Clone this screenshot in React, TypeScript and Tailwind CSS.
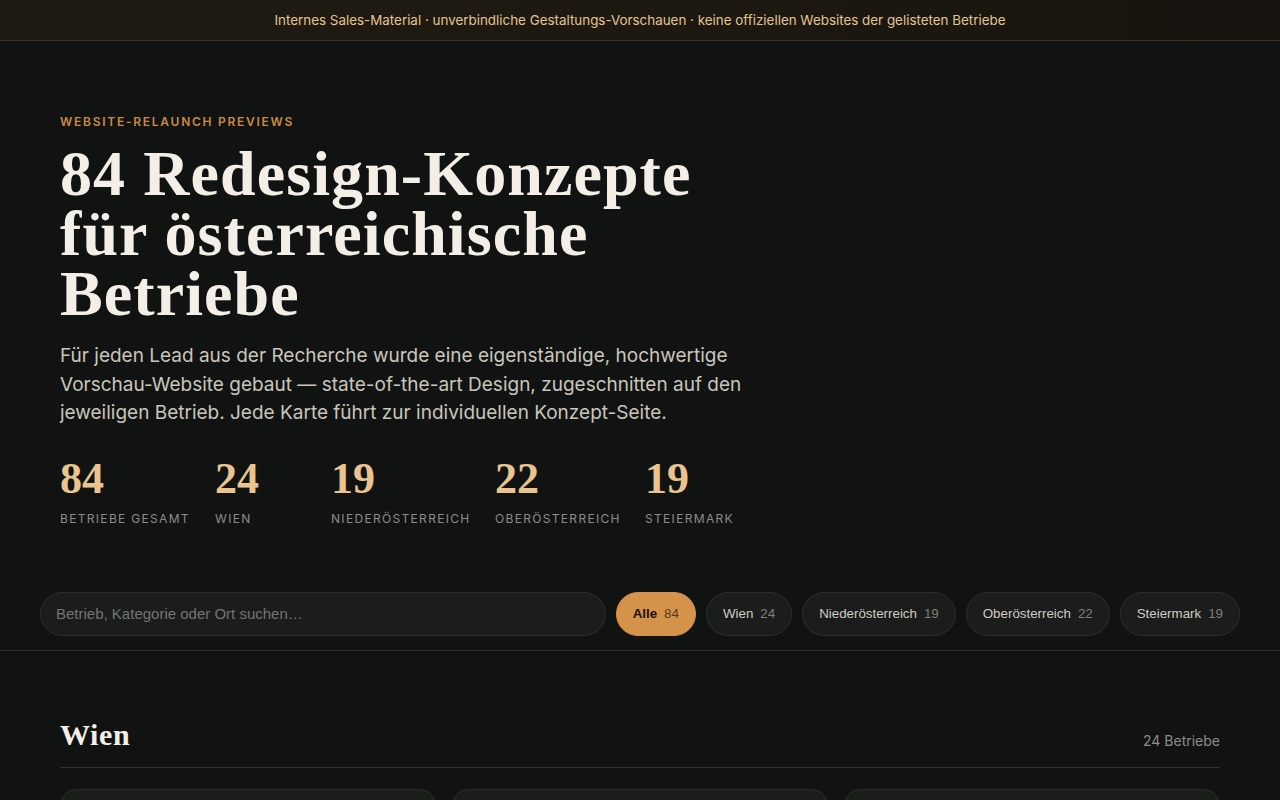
import { useState } from 'react'

const regions = [
    { key: 'alle', label: 'Alle', count: 84 },
    { key: 'wien', label: 'Wien', count: 24 },
    { key: 'noe', label: 'Niederösterreich', count: 19 },
    { key: 'ooe', label: 'Oberösterreich', count: 22 },
    { key: 'stmk', label: 'Steiermark', count: 19 },
]

const stats = [
    { value: 84, label: 'Betriebe gesamt', width: 'w-[129px]' },
    { value: 24, label: 'Wien', width: 'w-[90px]' },
    { value: 19, label: 'Niederösterreich', width: 'w-[138px]' },
    { value: 22, label: 'Oberösterreich', width: 'w-[124px]' },
    { value: 19, label: 'Steiermark', width: 'w-[90px]' },
]

const serif = "font-['Liberation_Serif','DejaVu_Serif',serif]"
const ui = "font-['Liberation_Sans',Arial,sans-serif]"

export default function App() {
    const [active, setActive] = useState('alle')
    const [query, setQuery] = useState('')

    return (
        <div className="min-h-screen bg-[#111312] text-[#f3efe7] font-['Inter','Noto_Sans',sans-serif]">
            {/* Notice bar */}
            <div className="h-[41px] flex items-center justify-center bg-gradient-to-r from-[#1f1a12] via-[#1d1911] to-[#17140f] border-b border-[#3a3124] text-[13.4px] text-[#e2c594]">
                Internes Sales-Material · unverbindliche Gestaltungs-Vorschauen · keine offiziellen Websites der gelisteten Betriebe
            </div>

            {/* Hero */}
            <header className="px-[60px] pt-[72px]">
                <div className="text-[12px] font-semibold tracking-[0.145em] uppercase text-[#c98a45]">
                    Website-Relaunch Previews
                </div>
                <h1 className={`${serif} mt-[13px] text-[64px] leading-[60px] font-bold tracking-[0.017em] text-[#f3efe7]`}>
                    84 Redesign-Konzepte
                    <br />
                    für österreichische
                    <br />
                    Betriebe
                </h1>
                <p className="mt-[18px] max-w-[700px] text-[19px] leading-[28.5px] text-[#c9c5bd]">
                    Für jeden Lead aus der Recherche wurde eine eigenständige, hochwertige Vorschau-Website gebaut — state-of-the-art Design, zugeschnitten auf den jeweiligen Betrieb. Jede Karte führt zur individuellen Konzept-Seite.
                </p>

                <div className="mt-[29px] flex gap-[26px]">
                    {stats.map((s) => (
                        <div key={s.label} className={s.width}>
                            <div className={`${serif} text-[44px] leading-[44px] font-bold text-[#e9c48e]`}>{s.value}</div>
                            <div className="mt-[10px] text-[12px] leading-[16px] uppercase tracking-[0.11em] text-[#8b8d88] whitespace-nowrap">
                                {s.label}
                            </div>
                        </div>
                    ))}
                </div>
            </header>

            {/* Filter bar */}
            <div className="mt-[65px] px-10 pb-[14px] border-b border-[#2a2d2b]">
                <div className="flex items-center gap-[10px]">
                    <input
                        value={query}
                        onChange={(e) => setQuery(e.target.value)}
                        placeholder="Betrieb, Kategorie oder Ort suchen…"
                        className={`${ui} flex-1 h-11 rounded-full bg-[#1a1d1b] border border-[#2b2f2c] px-[15px] text-[15px] text-[#e8e4dc] placeholder:text-[#73766f] outline-none`}
                    />
                    {regions.map((r) => {
                        const isActive = active === r.key
                        return (
                            <button
                                key={r.key}
                                onClick={() => setActive(r.key)}
                                className={
                                    isActive
                                        ? `${ui} h-11 px-4 rounded-full bg-[#d4924a] border border-[#d4924a] text-[13.333px] font-bold text-[#1a120a] flex items-center gap-[7px]`
                                        : `${ui} h-11 px-4 rounded-full bg-[#1a1d1b] border border-[#2b2f2c] text-[13.333px] text-[#cfcbc3] flex items-center gap-[7px]`
                                }
                            >
                                {r.label}
                                <span className={isActive ? 'font-normal text-[#5a3a1a]' : 'text-[#7d807a]'}>{r.count}</span>
                            </button>
                        )
                    })}
                </div>
            </div>

            {/* Region section */}
            <section className="px-[60px] pt-[66px]">
                <div className="flex items-end justify-between pb-[14px] border-b border-[#2e312f]">
                    <h2 className={`${serif} text-[30px] leading-[36px] font-bold tracking-[0.02em] text-[#f3efe7]`}>Wien</h2>
                    <span className="text-[14px] text-[#8b8d88] mb-[2px]">24 Betriebe</span>
                </div>
                <div className="mt-[21px] grid grid-cols-3 gap-4">
                    {[0, 1, 2].map((i) => (
                        <div key={i} className="h-[220px] rounded-2xl bg-[#1b1f1c] border border-[#2a2e2b]" />
                    ))}
                </div>
            </section>
        </div>
    )
}
